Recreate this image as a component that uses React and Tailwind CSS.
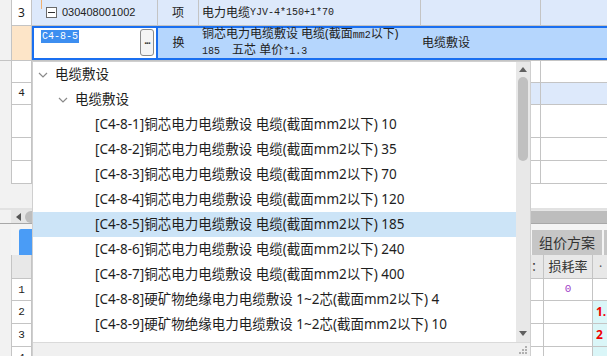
const items = [
  ['[C4-8-1]铜芯电力电缆敷设 电缆(截面mm2以下) 10', false],
  ['[C4-8-2]铜芯电力电缆敷设 电缆(截面mm2以下) 35', false],
  ['[C4-8-3]铜芯电力电缆敷设 电缆(截面mm2以下) 70', false],
  ['[C4-8-4]铜芯电力电缆敷设 电缆(截面mm2以下) 120', false],
  ['[C4-8-5]铜芯电力电缆敷设 电缆(截面mm2以下) 185', true],
  ['[C4-8-6]铜芯电力电缆敷设 电缆(截面mm2以下) 240', false],
  ['[C4-8-7]铜芯电力电缆敷设 电缆(截面mm2以下) 400', false],
  ['[C4-8-8]硬矿物绝缘电力电缆敷设 1~2芯(截面mm2以下) 4', false],
  ['[C4-8-9]硬矿物绝缘电力电缆敷设 1~2芯(截面mm2以下) 10', false],
];

const sans = { fontFamily: '"Noto Sans", "Noto Sans CJK SC", sans-serif' };

function Chevron() {
  return (
    <svg width="10" height="6" viewBox="0 0 10 6" className="shrink-0">
      <polyline points="1,1 5,5 9,1" fill="none" stroke="#8a8a8a" strokeWidth="1.2" />
    </svg>
  );
}

function GridRow({ h, num, blue, children }) {
  return (
    <div className="flex" style={{ height: h }}>
      <div className="w-[11px] bg-[#f2f2f2]" />
      <div className="w-[21px] border-x border-b border-[#c4c4c4] bg-white flex items-center justify-center text-[12px] text-[#222]">
        {num}
      </div>
      <div className={`w-[509px] border-b border-r border-[#c4c4c4] ${blue ? 'bg-[#dde9fb]' : 'bg-white'}`}>{children}</div>
      <div className={`flex-1 border-b border-[#c4c4c4] ${blue ? 'bg-[#dde9fb]' : 'bg-white'}`} />
    </div>
  );
}

function BottomRow({ h, num, zero, red, cyan, header }) {
  const bg = header ? 'bg-[#e8e8e8]' : 'bg-white';
  return (
    <div className="flex" style={{ height: h }}>
      <div className="w-[11px] bg-[#f2f2f2]" />
      <div className={`w-[21px] border-x border-b border-[#c4c4c4] ${bg} flex items-start pt-[3px] justify-center text-[12px] text-[#222]`}>
        {num}
      </div>
      <div className={`w-[499px] border-b border-[#c4c4c4] ${bg}`} />
      <div className={`w-[13px] border-b border-r border-[#c4c4c4] ${bg} flex items-center text-[12px] text-[#333]`}>
        {header ? '：' : ''}
      </div>
      <div className={`w-[49px] border-b border-r border-[#c4c4c4] ${bg} flex items-center justify-center text-[12px]`}>
        {header ? <span className="text-[#333] text-[13px]">损耗率</span> : zero ? <span className="text-[#a040c8] font-['Liberation_Mono'] text-[11px]">0</span> : null}
      </div>
      <div className={`flex-1 border-b border-[#c4c4c4] ${header ? bg : cyan ? 'bg-[#daf6f8]' : 'bg-white'} flex items-center pl-[3px] text-[12px]`}>
        {header ? <span className="text-[#555] pl-[3px]">·</span> : red ? <span className="text-[#f00000] font-bold">{red}</span> : null}
      </div>
    </div>
  );
}

export default function App() {
  return (
    <div className="relative w-[607px] h-[356px] overflow-hidden bg-white" style={sans}>
      {/* row 3 */}
      <div className="flex h-[26px]">
        <div className="w-[11px] bg-[#f2f2f2]" />
        <div className="w-[21px] border-x border-b border-[#c4c4c4] bg-white flex items-center justify-center text-[12px] text-[#222]">3</div>
        <div className="relative w-[126px] border-r border-b border-[#c4c4c4] bg-[#dde9fb] flex items-center">
          <div className="absolute left-[9px] top-0 h-[9px] w-px bg-[#f0b070]" />
          <div className="ml-[14px] w-[11px] h-[11px] border border-[#6a6a6a] bg-white flex items-center justify-center">
            <div className="w-[7px] h-px bg-[#333]" />
          </div>
          <span className="ml-[5px] text-[11px] text-[#222] font-['Liberation_Sans']">030408001002</span>
        </div>
        <div className="w-[41px] border-r border-b border-[#c4c4c4] bg-[#dde9fb] flex items-center justify-center text-[12px] text-[#222]">项</div>
        <div className="w-[222px] border-r border-b border-[#c4c4c4] bg-[#dde9fb] flex items-center pl-[3px] text-[12px] text-[#222]">
          电力电缆<span className="font-['Liberation_Mono'] text-[10px]">YJV-4*150+1*70</span>
        </div>
        <div className="w-[120px] border-r border-b border-[#c4c4c4] bg-[#dde9fb]" />
        <div className="flex-1 border-b border-[#c4c4c4] bg-[#dde9fb]" />
      </div>

      {/* editing row */}
      <div className="flex h-[35px] border-b border-[#c4c4c4]">
        <div className="w-[11px] bg-[#f2f2f2]" />
        <div className="w-[21px] border-x border-[#c4c4c4] bg-[#fde5c8]" />
        <div className="relative w-[126px] border-2 border-[#1a6ff0] bg-white">
          <span className="absolute left-[7px] top-[2px] px-px bg-[#3d8ef0] text-white font-['Liberation_Mono'] text-[10px] leading-[13px]">C4-8-5</span>
          <div className="absolute right-[2px] top-[1px] w-[14px] h-[27px] rounded-[3px] border border-[#8a8a8a] bg-[#f4f4f4] flex items-center justify-center">
            <span className="text-[10px] leading-none text-[#333] font-bold tracking-[-1px]">···</span>
          </div>
        </div>
        <div className="flex flex-1 border-y-2 border-[#1a6ff0] bg-[#b5d6fd]">
          <div className="w-[41px] flex items-center justify-center text-[12px] text-[#222]">换</div>
          <div className="w-[222px] flex flex-col justify-center pl-[3px] text-[12px] leading-[14px] text-[#222]">
            <span>铜芯电力电缆敷设 电缆(截面<span className="font-['Liberation_Mono'] text-[10px]">mm2</span>以下)</span>
            <span><span className="font-['Liberation_Mono'] text-[10px] whitespace-pre">185  </span>五芯 单价<span className="font-['Liberation_Mono'] text-[10px]">*1.3</span></span>
          </div>
          <div className="flex items-center pl-px text-[12px] text-[#222]">电缆敷设</div>
        </div>
      </div>

      <GridRow h={22} />
      <GridRow h={22} num={<span className="font-['Liberation_Mono'] text-[11px]">4</span>} blue />
      <GridRow h={33} />
      <GridRow h={23} />
      <GridRow h={23} />

      {/* empty strip */}
      <div className="flex h-[24px]">
        <div className="w-[32px] bg-[#f2f2f2]" />
        <div className="flex-1 bg-white" />
      </div>

      {/* horizontal scrollbar */}
      <div className="flex h-[15px] border-t-2 border-[#e2e2e2] bg-[#e6e6e6] items-center">
        <div className="w-[11px] self-stretch bg-[#f2f2f2]" />
        <svg width="10" height="8" viewBox="0 0 10 8" className="ml-[3px]">
          <polygon points="7,0 7,8 2,4" fill="#555" />
        </svg>
        <div className="ml-[1px] flex-1 h-[12px] rounded-l-full bg-[#bdbdbd]" />
      </div>

      {/* tab strip */}
      <div className="flex h-[32px] border-t border-[#a8a8a8] bg-[#f4f4f4]">
        <div className="w-[11px] bg-[#f2f2f2]" />
        <div className="w-[8px]" />
        <div className="w-[40px] mt-[5px] bg-[#4a9cf6] rounded-t-[2px]" />
        <div className="w-[473px]" />
        <div className="w-[70px] mt-[6px] bg-[#c6c6c6] flex items-center justify-center text-[14px] text-[#333]">组价方案</div>
        <div className="w-[2px]" />
        <div className="flex-1 mt-[6px] bg-[#c6c6c6]" />
      </div>

      <BottomRow h={24} header />
      <BottomRow h={22} num={<span className="font-['Liberation_Mono'] text-[11px]">1</span>} zero />
      <BottomRow h={23} num={<span className="font-['Liberation_Mono'] text-[11px]">2</span>} cyan red="1." />
      <BottomRow h={23} num={<span className="font-['Liberation_Mono'] text-[11px]">3</span>} cyan red="2" />
      <BottomRow h={23} num={<span className="font-['Liberation_Mono'] text-[11px]">4</span>} cyan />

      {/* dropdown */}
      <div className="absolute left-[32px] top-[61px] w-[499px] h-[295px] flex flex-col border-l border-t border-r border-[#cfcfcf] bg-white">
        <div className="flex flex-1 min-h-0">
          <div className="flex-1 overflow-hidden text-[13.5px] text-[#1e1e1e]">
            <div className="h-[25px] flex items-center pl-[5px] gap-[7px]">
              <Chevron />
              <span>电缆敷设</span>
            </div>
            <div className="h-[25px] flex items-center pl-[25px] gap-[7px]">
              <Chevron />
              <span>电缆敷设</span>
            </div>
            {items.map(([t, sel]) => (
              <div key={t} className={`h-[25px] flex items-center pl-[62px] whitespace-nowrap ${sel ? 'bg-[#cce4f7]' : ''}`}>
                {t}
              </div>
            ))}
          </div>
          <div className="w-[14px] bg-[#e8e8e8] flex flex-col items-center">
            <svg width="8" height="5" viewBox="0 0 8 5" className="mt-[5px]">
              <polygon points="0,5 8,5 4,0" fill="#606060" />
            </svg>
            <div className="mt-[5px] w-[10px] h-[84px] rounded-full bg-[#c0c0c0]" />
            <div className="flex-1" />
            <svg width="8" height="5" viewBox="0 0 8 5" className="mb-[6px]">
              <polygon points="0,0 8,0 4,5" fill="#606060" />
            </svg>
          </div>
        </div>
        <div className="h-[14px] border-t border-[#dadada] bg-[#f0f0f0] flex justify-end items-end pr-[2px] pb-[1px]">
          <svg width="10" height="10" viewBox="0 0 10 10">
            <rect x="7" y="1" width="2" height="2" fill="#b0b0b0" />
            <rect x="4" y="4" width="2" height="2" fill="#b0b0b0" />
            <rect x="7" y="4" width="2" height="2" fill="#b0b0b0" />
            <rect x="1" y="7" width="2" height="2" fill="#b0b0b0" />
            <rect x="4" y="7" width="2" height="2" fill="#b0b0b0" />
            <rect x="7" y="7" width="2" height="2" fill="#b0b0b0" />
          </svg>
        </div>
      </div>
    </div>
  );
}
